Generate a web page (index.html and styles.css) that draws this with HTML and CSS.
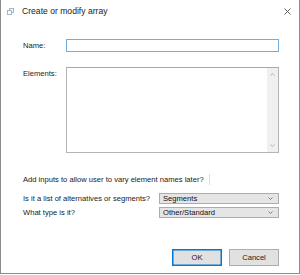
FILE: index.html
```html
<!DOCTYPE html>
<html>
<head>
<meta charset="utf-8">
<link rel="stylesheet" href="styles.css">
</head>
<body>
<div class="window">
  <div class="titlebar">
    <svg class="app-icon" width="7" height="7" viewBox="0 0 7 7">
      <rect x="2.5" y="0.5" width="4" height="4" fill="none" stroke="#9fb5c8" stroke-width="1"/>
      <rect x="0.5" y="2.5" width="4" height="4" fill="#fff" stroke="#9fb5c8" stroke-width="1"/>
    </svg>
    <span class="title">Create or modify array</span>
    <svg class="close" width="7" height="7" viewBox="0 0 7 7">
      <path d="M0.5 0.5 L6.5 6.5 M6.5 0.5 L0.5 6.5" stroke="#555" stroke-width="0.9"/>
    </svg>
  </div>
  <div class="content">
    <div class="form">
      <label class="lbl lbl-name">Name:</label>
      <div class="input"></div>
      <label class="lbl lbl-el">Elements:</label>
      <div class="textarea">
        <div class="scroll">
          <svg width="5" height="3" viewBox="0 0 5 3"><path d="M0.5 2.5 L2.5 0.5 L4.5 2.5" fill="none" stroke="#a0a0a0" stroke-width="0.8"/></svg>
          <svg width="5" height="3" viewBox="0 0 5 3"><path d="M0.5 0.5 L2.5 2.5 L4.5 0.5" fill="none" stroke="#a0a0a0" stroke-width="0.8"/></svg>
        </div>
      </div>
    </div>
    <div class="check-row"><span>Add inputs to allow user to vary element names later?</span><span class="check-edge"></span></div>
    <div class="sel-row first">
      <span class="sel-lbl">Is it a list of alternatives or segments?</span>
      <div class="select"><span>Segments</span><svg width="5" height="3" viewBox="0 0 5 3"><path d="M0.5 0.5 L2.5 2.5 L4.5 0.5" fill="none" stroke="#666" stroke-width="0.8"/></svg></div>
    </div>
    <div class="sel-row">
      <span class="sel-lbl">What type is it?</span>
      <div class="select"><span>Other/Standard</span><svg width="5" height="3" viewBox="0 0 5 3"><path d="M0.5 0.5 L2.5 2.5 L4.5 0.5" fill="none" stroke="#666" stroke-width="0.8"/></svg></div>
    </div>
    <div class="buttons">
      <div class="btn btn-default">OK</div>
      <div class="btn">Cancel</div>
    </div>
  </div>
</div>
</body>
</html>
```
FILE: styles.css
```css
* { box-sizing: border-box; }
html, body { margin: 0; padding: 0; background: #fff; }
body {
  font-family: "Liberation Sans", Arial, sans-serif;
  font-size: 7.6px;
  color: #1a1a1a;
  width: 300px;
  height: 275px;
}
.window {
  width: 300px;
  height: 274px;
  border-left: 1px solid #8c8c8c;
  border-right: 1px solid #8c8c8c;
  border-bottom: 1px solid #8c8c8c;
  display: flex;
  flex-direction: column;
}
.titlebar {
  height: 22px;
  display: flex;
  align-items: center;
  padding-left: 6px;
  padding-right: 8px;
}
.app-icon { margin-right: 8px; }
.title { font-size: 8.6px; color: #222; flex: 1; }
.content {
  padding: 17px 20px 0 22px;
  display: flex;
  flex-direction: column;
}
.form {
  display: grid;
  grid-template-columns: 43px 1fr;
  row-gap: 15px;
}
.lbl { display: flex; align-items: flex-start; }
.lbl-name { align-items: center; }
.lbl-el { padding-top: 2px; }
.input {
  height: 13px;
  border: 1px solid #6fb0e4;
  background: #fff;
}
.textarea {
  height: 86px;
  border: 1px solid #b4b4b4;
  border-top-color: #a8a8a8;
  display: flex;
  justify-content: flex-end;
}
.scroll {
  width: 11px;
  background: #f0f0f0;
  display: flex;
  flex-direction: column;
  justify-content: space-between;
  align-items: center;
  padding: 5px 0;
}
.scroll svg { display: block; }
.check-row {
  margin-top: 20px;
  display: flex;
  align-items: center;
  gap: 5px;
  height: 12px;
}
.check-edge {
  width: 1px;
  height: 11px;
  background: #dcdcdc;
}
.sel-row {
  display: flex;
  align-items: center;
  margin-top: 3px;
  height: 11px;
}
.sel-row.first { margin-top: 8px; }
.sel-lbl { width: 136px; }
.select {
  flex: 1;
  height: 11px;
  background: #e5e5e5;
  border: 1px solid #acacac;
  display: flex;
  align-items: center;
  justify-content: space-between;
  padding: 0 5px 0 3px;
  color: #111;
}
.select svg { display: block; }
.buttons {
  margin-top: 31px;
  display: flex;
  justify-content: flex-end;
  gap: 7px;
}
.btn {
  width: 50px;
  height: 17px;
  background: #e1e1e1;
  border: 1px solid #adadad;
  display: flex;
  align-items: center;
  justify-content: center;
}
.btn-default {
  border: 1px solid #0078d7;
  box-shadow: inset 0 0 0 0.5px #0078d7;
}
```
